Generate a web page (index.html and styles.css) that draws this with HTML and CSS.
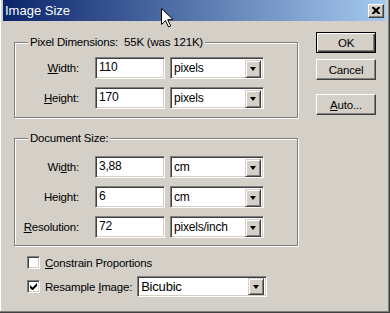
FILE: index.html
```html
<!DOCTYPE html>
<html>
<head>
<meta charset="utf-8">
<link rel="stylesheet" href="styles.css">
</head>
<body>
<div class="window">
  <div class="titlebar">
    <span class="title">Image Size</span>
    <span class="close"><svg width="8" height="7" viewBox="0 0 8 7"><path d="M0 0h2l2 2 2-2h2v1l-2.5 2.5L8 6v1H6L4 5 2 7H0V6l2.5-2.5L0 1z" fill="#000"/></svg></span>
  </div>
  <div class="client">
    <div class="main">
      <div class="group g1">
        <div class="group-title">Pixel Dimensions:&nbsp; 55K (was 121K)</div>
        <div class="rows">
          <div class="row">
            <span class="lbl"><u>W</u>idth:</span>
            <div class="field">110</div>
            <div class="select">pixels<span class="drop"><i class="tri"></i></span></div>
          </div>
          <div class="row">
            <span class="lbl"><u>H</u>eight:</span>
            <div class="field">170</div>
            <div class="select">pixels<span class="drop"><i class="tri"></i></span></div>
          </div>
        </div>
      </div>
      <div class="group g2">
        <div class="group-title">Document Size:</div>
        <div class="rows">
          <div class="row">
            <span class="lbl">Wi<u>d</u>th:</span>
            <div class="field">3,88</div>
            <div class="select">cm<span class="drop"><i class="tri"></i></span></div>
          </div>
          <div class="row">
            <span class="lbl">Hei<u>g</u>ht:</span>
            <div class="field">6</div>
            <div class="select">cm<span class="drop"><i class="tri"></i></span></div>
          </div>
          <div class="row">
            <span class="lbl"><u>R</u>esolution:</span>
            <div class="field">72</div>
            <div class="select">pixels/inch<span class="drop"><i class="tri"></i></span></div>
          </div>
        </div>
      </div>
      <div class="checks">
        <div class="check-row">
          <span class="box"></span>
          <span class="ctext"><u>C</u>onstrain Proportions</span>
        </div>
        <div class="check-row">
          <span class="box"><svg width="7" height="7" viewBox="0 0 7 7"><path d="M0 2v3l2 2h1l4-4V0L2.5 4.5z" fill="#000"/></svg></span>
          <span class="ctext">Resample <u>I</u>mage:</span>
          <div class="select wide">Bicubic<span class="drop"><i class="tri"></i></span></div>
        </div>
      </div>
    </div>
    <div class="buttons">
      <div class="btn default"><span>OK</span></div>
      <div class="btn">Cancel</div>
      <div class="btn auto"><span><u>A</u>uto...</span></div>
    </div>
  </div>
  <svg class="cursor" width="12" height="20" viewBox="0 0 12 20"><path d="M0.5 0.5v16l4-4 3 6.5 2.2-1-3-6.3h5.5z" fill="#fff" stroke="#000" stroke-width="1"/></svg>
</div>
</body>
</html>
```
FILE: styles.css
```css
* { box-sizing: border-box; }
html, body { margin: 0; padding: 0; }
body {
  width: 390px;
  height: 313px;
  overflow: hidden;
  background: #d4d0c8;
  font-family: "Liberation Sans", Arial, sans-serif;
  font-size: 11.5px;
  letter-spacing: -0.2px;
  color: #000;
}
.window {
  position: relative;
  width: 390px;
  height: 313px;
  padding: 0 3px 3px 3px;
  background: #d4d0c8;
  border-right: 1px solid #404040;
  border-bottom: 1px solid #404040;
  box-shadow: inset -1px -1px #808080, inset 1px 0 #fff;
  display: flex;
  flex-direction: column;
}
.titlebar {
  height: 21px;
  flex: none;
  background: linear-gradient(to right, #0a246a, #a6caf0);
  display: flex;
  align-items: center;
  justify-content: space-between;
  padding: 0 2px 0 2px;
}
.title {
  color: #fff;
  font-size: 13px;
  letter-spacing: 0;
  line-height: 16px;
}
.close {
  width: 16px;
  height: 14px;
  background: #d4d0c8;
  border: 1px solid;
  border-color: #fff #404040 #404040 #fff;
  box-shadow: inset -1px -1px #808080;
  display: flex;
  align-items: center;
  justify-content: center;
  padding-right: 1px;
}
.client {
  flex: 1;
  display: flex;
  padding: 11px 0 0 11px;
  gap: 18px;
}
.main {
  width: 284px;
  padding-top: 10px;
  display: flex;
  flex-direction: column;
}
.group {
  border: 1px solid #808080;
  box-shadow: inset 1px 1px #fff, 1px 1px #fff;
}
.g1 { padding-bottom: 8px; }
.g2 { margin-top: 20px; padding-bottom: 7px; }
.group-title {
  width: fit-content;
  margin: -8px 0 0 13px;
  padding: 0 2px;
  background: #d4d0c8;
  line-height: 14px;
}
.rows {
  display: flex;
  flex-direction: column;
  gap: 8px;
}
.g1 .rows { margin-top: 8px; }
.g2 .rows { margin-top: 11px; }
.row {
  display: flex;
  align-items: center;
  height: 22px;
}
.lbl {
  width: 64px;
  text-align: right;
  margin-right: 16px;
}
.field {
  width: 70px;
  height: 22px;
  background: #fff;
  border: 1px solid;
  border-color: #808080 #fff #fff #808080;
  box-shadow: inset 1px 1px #404040, inset -1px -1px #d4d0c8;
  padding: 2px 3px;
  line-height: 15px;
  font-size: 12px;
  margin-right: 5px;
}
.select {
  width: 94px;
  height: 22px;
  background: #fff;
  border: 1px solid;
  border-color: #808080 #fff #fff #808080;
  box-shadow: inset 1px 1px #404040, inset -1px -1px #d4d0c8;
  padding: 2px 2px 2px 3px;
  line-height: 17px;
  font-size: 12px;
  display: flex;
  justify-content: space-between;
}
.drop {
  width: 16px;
  height: 18px;
  background: #d4d0c8;
  border: 1px solid;
  border-color: #d4d0c8 #404040 #404040 #d4d0c8;
  box-shadow: inset 1px 1px #fff, inset -1px -1px #808080;
  display: flex;
  align-items: center;
  justify-content: center;
}
.tri {
  width: 0;
  height: 0;
  border-left: 3.5px solid transparent;
  border-right: 3.5px solid transparent;
  border-top: 4px solid #000;
}
.checks {
  margin-top: 6px;
  padding-left: 13px;
  display: flex;
  flex-direction: column;
  gap: 3px;
}
.check-row {
  display: flex;
  align-items: center;
  height: 21px;
}
.box {
  width: 13px;
  height: 13px;
  background: #fff;
  border: 1px solid;
  border-color: #808080 #fff #fff #808080;
  box-shadow: inset 1px 1px #404040, inset -1px -1px #d4d0c8;
  display: flex;
  align-items: center;
  justify-content: center;
  margin-right: 5px;
}
.ctext { margin-right: 5px; }
.select.wide {
  width: 130px;
  height: 21px;
  padding-top: 1px;
  padding-bottom: 2px;
  font-size: 13px;
}
.select.wide .drop { height: 17px; }
.buttons {
  padding-top: 0;
  display: flex;
  flex-direction: column;
  width: 60px;
}
.btn {
  width: 60px;
  height: 21px;
  background: #d4d0c8;
  border: 1px solid;
  border-color: #fff #404040 #404040 #fff;
  box-shadow: inset -1px -1px #808080;
  display: flex;
  align-items: center;
  justify-content: center;
  line-height: 14px;
  margin-top: 6px;
}
.btn.default {
  margin-top: 0;
  border: 1px solid #000;
  box-shadow: inset 1px 1px #fff, inset -1px -1px #404040, inset -2px -2px #808080;
}
.btn.auto { margin-top: 14px; }
.cursor {
  position: absolute;
  left: 161px;
  top: 8px;
}
```
